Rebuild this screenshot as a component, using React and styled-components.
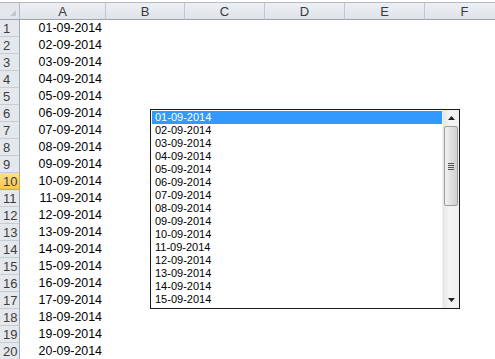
import React from "react";
import styled, { createGlobalStyle } from "styled-components";

const Global = createGlobalStyle`
  html, body { margin: 0; padding: 0; background: #fff; }
  body { width: 495px; height: 359px; overflow: hidden; font-family: "Liberation Sans", Arial, sans-serif; }
`;

const Page = styled.div`
  position: relative;
  width: 495px;
  height: 359px;
  overflow: hidden;
  background: #fff;
  padding-top: 2px;
  box-sizing: border-box;
`;

const Grid = styled.div`
  display: grid;
  grid-template-columns: 20px 86px 79px 80px 80px 80px 80px;
  grid-template-rows: 18px repeat(20, 17px);
  width: 505px;
`;

const Corner = styled.div`
  position: relative;
  background: #e3e7ec;
  border-top: 1px solid #b4bac3;
  border-right: 1px solid #b4bac3;
  border-bottom: 1px solid #9aa3ae;
  box-sizing: border-box;
  &::after {
    content: "";
    position: absolute;
    right: 3px;
    bottom: 3px;
    width: 0;
    height: 0;
    border-left: 6px solid transparent;
    border-bottom: 6px solid #c3c8cf;
  }
`;

const ColHead = styled.div`
  background: linear-gradient(#eceff3, #e0e4e9);
  border-top: 1px solid #b4bac3;
  border-right: 1px solid #c1c7cf;
  border-bottom: 1px solid #9aa3ae;
  box-sizing: border-box;
  display: flex;
  align-items: center;
  justify-content: center;
  font-size: 13px;
  color: #3a3a3a;
  line-height: 1;
`;

const RowHead = styled.div`
  background: ${(p) => (p.$active ? "linear-gradient(#fbe08d, #f5c94e)" : "#e4e8ed")};
  border-right: 1px solid ${(p) => (p.$active ? "#d6a838" : "#9eaab7")};
  border-bottom: 1px solid ${(p) => (p.$active ? "#d6a838" : "#c6ccd4")};
  box-sizing: border-box;
  display: flex;
  align-items: center;
  padding-left: 3px;
  font-size: 13px;
  color: #3c3c3c;
  line-height: 1;
`;

const Cell = styled.div`
  display: flex;
  align-items: center;
  justify-content: flex-end;
  padding-right: 4px;
  font-size: 12.4px;
  color: #000;
  line-height: 1;
  background: #fff;
`;

const EmptyCell = styled.div`
  background: #fff;
`;

const ListBox = styled.div`
  position: absolute;
  left: 150px;
  top: 109px;
  width: 310px;
  height: 200px;
  box-sizing: border-box;
  border: 1px solid #1a1a1a;
  display: flex;
  background: #fff;
`;

const Items = styled.div`
  flex: 1;
  padding: 1px 0 0 1px;
  display: flex;
  flex-direction: column;
`;

const Item = styled.div`
  height: 13px;
  flex: 0 0 13px;
  padding-left: 3px;
  font-size: 11px;
  line-height: 13px;
  color: ${(p) => (p.$selected ? "#fff" : "#000")};
  background: ${(p) => (p.$selected ? "#3399ff" : "transparent")};
`;

const ScrollBar = styled.div`
  width: 16px;
  display: flex;
  flex-direction: column;
  background: linear-gradient(90deg, #e6e6e6, #f4f4f4 40%, #efefef);
  border-left: 1px solid #f0f0f0;
`;

const Arrow = styled.div`
  height: 16px;
  flex: 0 0 16px;
  display: flex;
  align-items: center;
  justify-content: center;
`;

const Track = styled.div`
  flex: 1;
  display: flex;
  flex-direction: column;
  padding: 0 1px;
`;

const Thumb = styled.div`
  height: 80px;
  flex: 0 0 80px;
  box-sizing: border-box;
  border: 1px solid #9c9c9c;
  border-radius: 2px;
  background: linear-gradient(90deg, #f2f2f2, #dedede 55%, #d0d0d0);
  display: flex;
  flex-direction: column;
  align-items: center;
  justify-content: center;
  gap: 1px;
`;

const Grip = styled.div`
  width: 6px;
  height: 1px;
  background: #555;
`;

const cols = ["A", "B", "C", "D", "E", "F"];
const dates = Array.from({ length: 20 }, (_, i) => `${String(i + 1).padStart(2, "0")}-09-2014`);

export default function App() {
  return (
    <Page>
      <Global />
      <Grid>
        <Corner />
        {cols.map((c) => (
          <ColHead key={c}>{c}</ColHead>
        ))}
        {dates.map((d, i) => (
          <React.Fragment key={d}>
            <RowHead $active={i === 9}>{i + 1}</RowHead>
            <Cell>{d}</Cell>
            {cols.slice(1).map((c) => (
              <EmptyCell key={c} />
            ))}
          </React.Fragment>
        ))}
      </Grid>
      <ListBox>
        <Items>
          {dates.slice(0, 15).map((d, i) => (
            <Item key={d} $selected={i === 0}>
              {d}
            </Item>
          ))}
        </Items>
        <ScrollBar>
          <Arrow>
            <svg width="7" height="4" viewBox="0 0 7 4">
              <path d="M0 4 L3.5 0 L7 4 Z" fill="#222" />
            </svg>
          </Arrow>
          <Track>
            <Thumb>
              <Grip />
              <Grip />
              <Grip />
              <Grip />
            </Thumb>
          </Track>
          <Arrow>
            <svg width="7" height="4" viewBox="0 0 7 4">
              <path d="M0 0 L7 0 L3.5 4 Z" fill="#222" />
            </svg>
          </Arrow>
        </ScrollBar>
      </ListBox>
    </Page>
  );
}
